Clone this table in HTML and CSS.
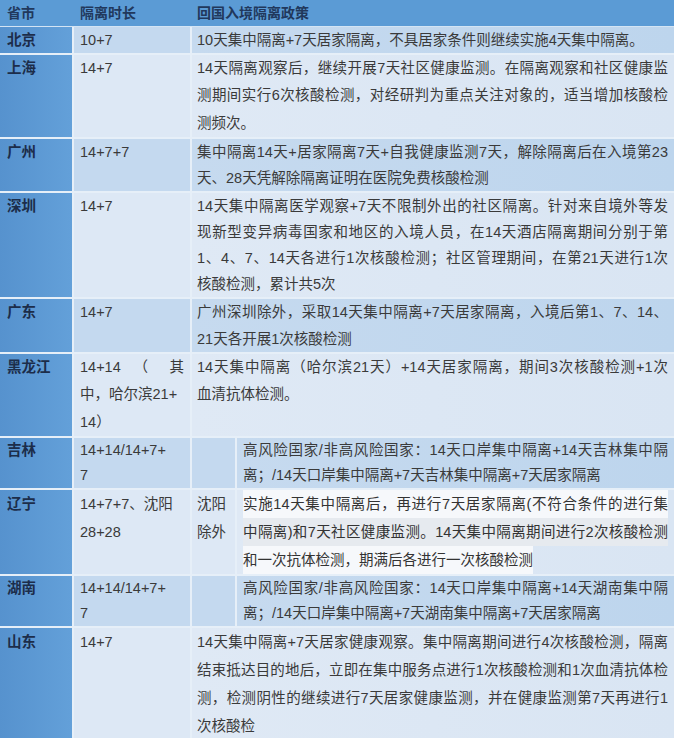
FILE: index.html
```html
<!DOCTYPE html>
<html lang="zh-CN">
<head>
<meta charset="utf-8">
<title>回国入境隔离政策</title>
<link rel="stylesheet" href="styles.css">
</head>
<body>
<div class="tbl">
  <div class="row hd">
    <div class="c p">省市</div>
    <div class="c d">隔离时长</div>
    <div class="c pol">回国入境隔离政策</div>
  </div>

  <div class="row dark l26">
    <div class="c p">北京</div>
    <div class="c d">10+7</div>
    <div class="c pol"><span class="ln">10天集中隔离+7天居家隔离，不具居家条件则继续实施4天集中隔离。</span></div>
  </div>

  <div class="row light l27">
    <div class="c p">上海</div>
    <div class="c d">14+7</div>
    <div class="c pol">
      <span class="ln j">14天隔离观察后，继续开展7天社区健康监测。在隔离观察和社区健康监</span>
      <span class="ln j">测期间实行6次核酸检测，对经研判为重点关注对象的，适当增加核酸检</span>
      <span class="ln">测频次。</span>
    </div>
  </div>

  <div class="row dark l26">
    <div class="c p">广州</div>
    <div class="c d">14+7+7</div>
    <div class="c pol">
      <span class="ln j">集中隔离14天+居家隔离7天+自我健康监测7天，解除隔离后在入境第23</span>
      <span class="ln">天、28天凭解除隔离证明在医院免费核酸检测</span>
    </div>
  </div>

  <div class="row light l26">
    <div class="c p">深圳</div>
    <div class="c d">14+7</div>
    <div class="c pol">
      <span class="ln j">14天集中隔离医学观察+7天不限制外出的社区隔离。针对来自境外等发</span>
      <span class="ln j">现新型变异病毒国家和地区的入境人员，在14天酒店隔离期间分别于第</span>
      <span class="ln j">1、4、7、14天各进行1次核酸检测；社区管理期间，在第21天进行1次</span>
      <span class="ln">核酸检测，累计共5次</span>
    </div>
  </div>

  <div class="row dark l265">
    <div class="c p">广东</div>
    <div class="c d">14+7</div>
    <div class="c pol">
      <span class="ln j">广州深圳除外，采取14天集中隔离+7天居家隔离，入境后第1、7、14、</span>
      <span class="ln">21天各开展1次核酸检测</span>
    </div>
  </div>

  <div class="row light l27">
    <div class="c p">黑龙江</div>
    <div class="c d">
      <span class="ln jw">14+14 （ 其</span>
      <span class="ln">中，哈尔滨21+</span>
      <span class="ln">14）</span>
    </div>
    <div class="c pol">
      <span class="ln j">14天集中隔离（哈尔滨21天）+14天居家隔离，期间3次核酸检测+1次</span>
      <span class="ln">血清抗体检测。</span>
    </div>
  </div>

  <div class="row dark l25">
    <div class="c p">吉林</div>
    <div class="c d">
      <span class="ln">14+14/14+7+</span>
      <span class="ln">7</span>
    </div>
    <div class="c sub"></div>
    <div class="c pol nar">
      <span class="ln j">高风险国家/非高风险国家：14天口岸集中隔离+14天吉林集中隔</span>
      <span class="ln">离；/14天口岸集中隔离+7天吉林集中隔离+7天居家隔离</span>
    </div>
  </div>

  <div class="row light l28">
    <div class="c p">辽宁</div>
    <div class="c d">
      <span class="ln">14+7+7、沈阳</span>
      <span class="ln">28+28</span>
    </div>
    <div class="c sub">
      <span class="ln">沈阳</span>
      <span class="ln">除外</span>
    </div>
    <div class="c pol nar">
      <span class="ln j hl1">实施14天集中隔离后，再进行7天居家隔离(不符合条件的进行集</span>
      <span class="ln j hl2">中隔离)和7天社区健康监测。14天集中隔离期间进行2次核酸检测</span>
      <span class="ln hl1 fit">和一次抗体检测，期满后各进行一次核酸检测</span>
    </div>
  </div>

  <div class="row dark l25">
    <div class="c p">湖南</div>
    <div class="c d">
      <span class="ln">14+14/14+7+</span>
      <span class="ln">7</span>
    </div>
    <div class="c sub"></div>
    <div class="c pol nar">
      <span class="ln j">高风险国家/非高风险国家：14天口岸集中隔离+14天湖南集中隔</span>
      <span class="ln">离；/14天口岸集中隔离+7天湖南集中隔离+7天居家隔离</span>
    </div>
  </div>

  <div class="row light l28">
    <div class="c p">山东</div>
    <div class="c d">14+7</div>
    <div class="c pol">
      <span class="ln j">14天集中隔离+7天居家健康观察。集中隔离期间进行4次核酸检测，隔离</span>
      <span class="ln j">结束抵达目的地后，立即在集中服务点进行1次核酸检测和1次血清抗体检</span>
      <span class="ln j">测，检测阴性的继续进行7天居家健康监测，并在健康监测第7天再进行1</span>
      <span class="ln">次核酸检</span>
    </div>
  </div>
</div>
</body>
</html>
```

FILE: styles.css
```css
html, body {
  margin: 0;
  padding: 0;
  background: #ffffff;
}

body {
  font-family: "Liberation Sans", "Noto Sans CJK SC", sans-serif;
  font-size: 14.5px;
  color: #3a3a3a;
}

.tbl {
  width: 674px;
  overflow: hidden;
}

.row {
  display: grid;
  grid-template-columns: 74px 118px 45px 1fr;
  border-bottom: 2px solid #e6eff8;
}

.c {
  box-sizing: border-box;
  border-right: 2px solid #e6eff8;
  padding: 0 5px 0 6px;
}

.c:last-child {
  border-right: 0;
}

.p {
  padding-left: 7px;
  font-weight: bold;
  color: #1c2d4a;
  background: linear-gradient(90deg, #5692ce, #63a0d9);
}

.d {
  padding-left: 6px;
  padding-right: 6px;
}

.pol {
  grid-column: 3 / 5;
  padding: 0 6px 0 5px;
}

.pol.nar {
  grid-column: 4;
  padding-left: 6px;
}

.sub {
  padding-left: 5px;
}

/* header */
.hd {
  background: #5b9bd5;
  line-height: 26px;
  border-bottom: 1px solid #d3e4f4;
}

.hd .c {
  border-right: 0;
  background: transparent;
  font-weight: bold;
  font-size: 14px;
  color: #21385c;
}

/* row shades */
.dark .d,
.dark .sub {
  background: #c4d9ef;
}

.dark .pol {
  background: linear-gradient(90deg, #c6daef, #bdd5ed);
}

.light .d,
.light .sub {
  background: #dde8f5;
}

.light .pol {
  background: linear-gradient(90deg, #dfe9f5, #d9e5f3);
}

/* line heights */
.l25 { line-height: 25px; }
.l26 { line-height: 26px; }
.l265 { line-height: 26.5px; }
.l27 { line-height: 27.34px; }
.l28 { line-height: 28px; }

/* text lines */
.ln {
  display: block;
}

.j {
  text-align: justify;
  text-align-last: justify;
}

.jw {
  text-align: justify;
  text-align-last: justify;
  text-justify: inter-word;
}

.hl1 {
  background: #f6f8fb;
  color: #333333;
}

.hl2 {
  background: #e6eaef;
  color: #333333;
}

.fit {
  width: fit-content;
}
```
